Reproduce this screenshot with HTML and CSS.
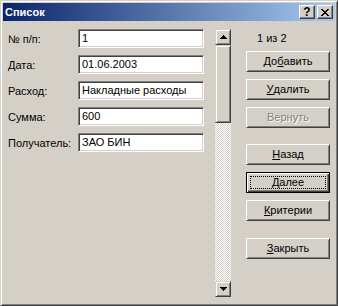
FILE: index.html
```html
<!DOCTYPE html>
<html lang="ru">
<head>
<meta charset="utf-8">
<title>Список</title>
<link rel="stylesheet" href="styles.css">
</head>
<body>
<div class="window">
  <div class="titlebar">
    <span class="title">Список</span>
    <div class="caption-btns">
      <span class="cbtn help">?</span>
      <span class="cbtn">
        <svg width="8" height="7" viewBox="0 0 8 7" shape-rendering="crispEdges"><path d="M0 0h2v1h-2zM6 0h2v1h-2zM1 1h2v1h-2zM5 1h2v1h-2zM2 2h4v1h-4zM3 3h2v1h-2zM2 4h4v1h-4zM1 5h2v1h-2zM5 5h2v1h-2zM0 6h2v1h-2zM6 6h2v1h-2z" fill="#000"/></svg>
      </span>
    </div>
  </div>
  <div class="client">
    <div class="form">
      <div class="row"><span class="label">№ п/п:</span><div class="field">1</div></div>
      <div class="row"><span class="label">Дата:</span><div class="field">01.06.2003</div></div>
      <div class="row"><span class="label">Расход:</span><div class="field">Накладные расходы</div></div>
      <div class="row"><span class="label">Сумма:</span><div class="field">600</div></div>
      <div class="row"><span class="label">Получатель:</span><div class="field">ЗАО БИН</div></div>
    </div>
    <div class="scrollbar">
      <div class="sb-btn"><svg width="7" height="4" viewBox="0 0 7 4" shape-rendering="crispEdges"><path d="M3 0h1v1h-1zM2 1h3v1h-3zM1 2h5v1h-5zM0 3h7v1h-7z" fill="#000"/></svg></div>
      <div class="thumb"></div>
      <div class="track"></div>
      <div class="sb-btn"><svg width="7" height="4" viewBox="0 0 7 4" shape-rendering="crispEdges"><path d="M0 0h7v1h-7zM1 1h5v1h-5zM2 2h3v1h-3zM3 3h1v1h-1z" fill="#000"/></svg></div>
    </div>
    <div class="actions">
      <div class="counter">1 из 2</div>
      <div class="btn">До<u>б</u>авить</div>
      <div class="btn"><u>У</u>далить</div>
      <div class="btn disabled">Вернуть</div>
      <div class="btn group"><u>Н</u>азад</div>
      <div class="btn default"><span class="focus"><u>Д</u>алее</span></div>
      <div class="btn"><u>К</u>ритерии</div>
      <div class="btn group2"><u>З</u>акрыть</div>
    </div>
  </div>
</div>
</body>
</html>
```
FILE: styles.css
```css
html, body {
  margin: 0;
  padding: 0;
}
body {
  width: 338px;
  height: 306px;
  overflow: hidden;
  background: #d4d0c8;
  font-family: "Liberation Sans", Arial, sans-serif;
  font-size: 11px;
  color: #000;
}
.window {
  box-sizing: border-box;
  width: 338px;
  height: 306px;
  background: #d4d0c8;
  border: 1px solid;
  border-color: #d4d0c8 #404040 #404040 #d4d0c8;
  box-shadow: inset 1px 1px #fff, inset -1px -1px #808080;
  padding: 2px;
  display: flex;
  flex-direction: column;
}
.titlebar {
  flex: none;
  height: 18px;
  background: linear-gradient(to right, #0a246a, #a6caf0);
  display: flex;
  align-items: center;
  justify-content: space-between;
  padding: 0 2px 0 2px;
}
.title {
  color: #fff;
  font-weight: bold;
  font-size: 11px;
  line-height: 13px;
}
.caption-btns {
  display: flex;
  gap: 2px;
}
.cbtn {
  box-sizing: border-box;
  width: 16px;
  height: 14px;
  background: #d4d0c8;
  border: 1px solid;
  border-color: #fff #404040 #404040 #fff;
  box-shadow: inset -1px -1px #808080;
  display: flex;
  align-items: center;
  justify-content: center;
}
.cbtn.help {
  font-weight: bold;
  font-size: 12px;
  line-height: 12px;
}
.client {
  flex: 1;
  display: flex;
  margin-top: 1px;
  padding: 7px 0 0 5px;
}
.form {
  width: 196px;
  display: flex;
  flex-direction: column;
  gap: 7px;
}
.row {
  display: flex;
  align-items: center;
  height: 19px;
}
.label {
  width: 70px;
  flex: none;
}
.field {
  box-sizing: border-box;
  width: 126px;
  height: 19px;
  background: #fff;
  border: 1px solid;
  border-color: #808080 #fff #fff #808080;
  box-shadow: inset 1px 1px #404040, inset -1px -1px #d4d0c8;
  padding: 0 3px;
  line-height: 17px;
  white-space: nowrap;
}
.scrollbar {
  margin-left: 11px;
  width: 16px;
  height: 268px;
  display: flex;
  flex-direction: column;
}
.sb-btn, .thumb {
  box-sizing: border-box;
  background: #d4d0c8;
  border: 1px solid;
  border-color: #d4d0c8 #404040 #404040 #d4d0c8;
  box-shadow: inset 1px 1px #fff, inset -1px -1px #808080;
}
.sb-btn {
  height: 16px;
  display: flex;
  align-items: center;
  justify-content: center;
}
.thumb {
  height: 78px;
}
.track {
  flex: 1;
  background: repeating-conic-gradient(#fff 0 25%, #d4d0c8 0 50%) 0 0 / 2px 2px;
}
.actions {
  margin-left: 15px;
  width: 84px;
  display: flex;
  flex-direction: column;
}
.counter {
  box-sizing: border-box;
  height: 22px;
  padding: 3px 0 0 11px;
  line-height: 13px;
}
.btn {
  box-sizing: border-box;
  height: 21px;
  margin-bottom: 7px;
  border: 1px solid;
  border-color: #fff #404040 #404040 #fff;
  box-shadow: inset 1px 1px #d4d0c8, inset -1px -1px #808080;
  display: flex;
  align-items: center;
  justify-content: center;
  line-height: 13px;
}
.btn u {
  text-underline-offset: 1px;
}
.btn.disabled {
  color: #808080;
  text-shadow: 1px 1px #fff;
}
.btn.group {
  margin-top: 9px;
}
.btn.group2 {
  margin-top: 10px;
}
.btn.default {
  border-color: #000;
  box-shadow: inset 1px 1px #fff, inset -1px -1px #404040, inset -2px -2px #808080;
  padding: 3px;
}
.focus {
  flex: 1;
  align-self: stretch;
  display: flex;
  align-items: center;
  justify-content: center;
  outline: 1px dotted #000;
  outline-offset: -1px;
}
```
